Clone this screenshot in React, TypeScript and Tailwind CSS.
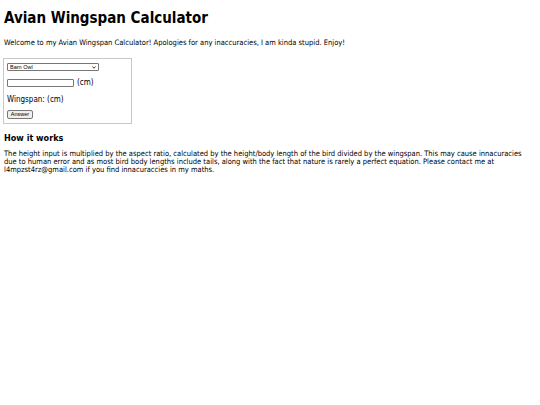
export default function App() {
  return (
    <div className="min-h-[405px] bg-white text-black font-['DejaVu_Sans_Condensed','DejaVu_Sans',sans-serif] font-stretch-condensed">
      <div className="px-[4px] pt-[9px]">
        <h1 className="text-[15px] font-bold leading-[18px]">
          Avian Wingspan Calculator
        </h1>
        <p className="mt-[12px] text-[7.5px] leading-[8px]">
          Welcome to my Avian Wingspan Calculator! Apologies for any inaccuracies, I am kinda stupid. Enjoy!
        </p>

        <div className="mt-[11px] w-[129px] -ml-[1px] border border-[#c8c8c8] px-[3px] pt-[4px] pb-[4px]">
          <div className="relative w-[92px]">
            <select className="block w-full h-[8px] appearance-none border border-[#767676] rounded-[1px] bg-white text-[5.5px] leading-[6px] pl-[2px] pr-[8px] font-['Liberation_Sans',sans-serif]">
              <option>Barn Owl</option>
            </select>
            <svg
              className="absolute right-[3px] top-[2.5px] pointer-events-none"
              width="4"
              height="3"
              viewBox="0 0 4 3"
            >
              <path d="M0.5 0.5 L2 2.2 L3.5 0.5" fill="none" stroke="#222" strokeWidth="0.9" />
            </svg>
          </div>
          <div className="mt-[7px] flex items-center gap-[3px]">
            <input
              type="text"
              className="w-[67px] h-[8px] border border-[#767676] rounded-[1px] bg-white"
            />
            <span className="text-[8px] leading-[9px]">(cm)</span>
          </div>
          <p className="mt-[8px] text-[8px] leading-[9px]">Wingspan: (cm)</p>
          <button className="mt-[6px] block h-[9px] w-[26px] border border-[#767676] rounded-[2px] bg-[#efefef] text-[5.5px] leading-[7px] font-['Liberation_Sans',sans-serif]">
            Answer
          </button>
        </div>

        <h2 className="mt-[9px] text-[9px] font-bold leading-[11px]">How it works</h2>
        <p className="mt-[6px] text-[7.5px] leading-[8px] max-w-[526px]">
          The height input is multiplied by the aspect ratio, calculated by the height/body length of the bird divided by the wingspan. This may cause innacuracies due to human error and as most bird body lengths include tails, along with the fact that nature is rarely a perfect equation. Please contact me at l4mpzst4rz@gmail.com if you find innacuraccies in my maths.
        </p>
      </div>
    </div>
  );
}
